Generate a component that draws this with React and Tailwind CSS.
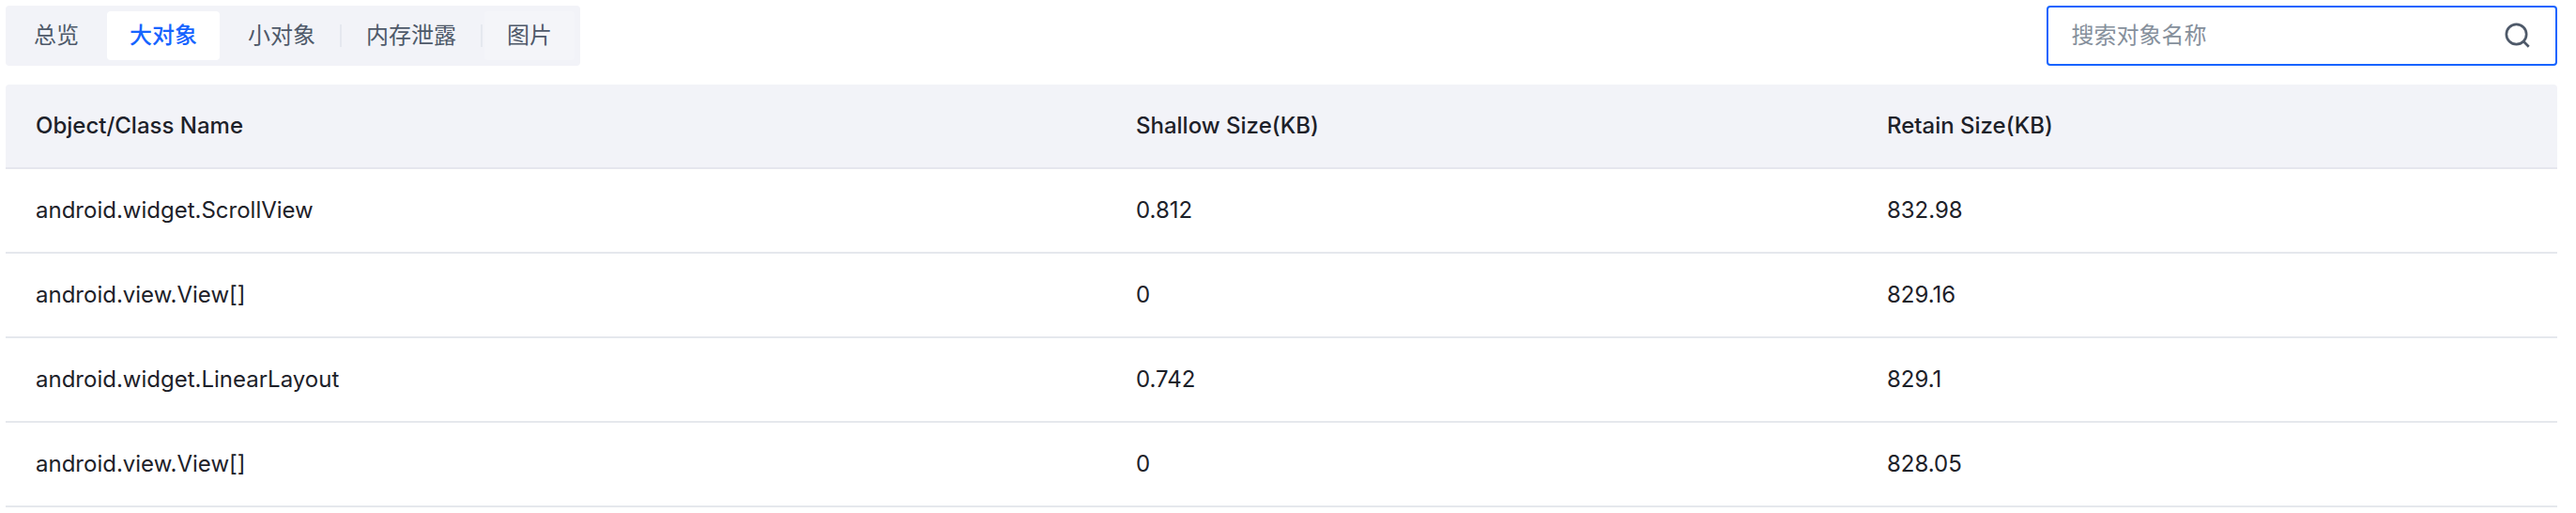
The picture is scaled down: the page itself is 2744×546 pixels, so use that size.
import { useState } from 'react';

const TABS = [
  { id: 'overview', label: '总览' },
  { id: 'large', label: '大对象' },
  { id: 'small', label: '小对象' },
  { id: 'leak', label: '内存泄露' },
  { id: 'image', label: '图片' },
];

const ROWS = [
  { id: 1, name: 'android.widget.ScrollView', shallow: '0.812', retain: '832.98' },
  { id: 2, name: 'android.view.View[]', shallow: '0', retain: '829.16' },
  { id: 3, name: 'android.widget.LinearLayout', shallow: '0.742', retain: '829.1' },
  { id: 4, name: 'android.view.View[]', shallow: '0', retain: '828.05' },
];

function getTabStyle(id, activeTab) {
  if (id === activeTab) return 'bg-white text-[#1664ff] font-medium';
  if (id === 'image') return 'bg-[#f4f5f9] text-[#4e5969]';
  return 'text-[#4e5969]';
}

function SearchIcon() {
  return (
    <svg className="w-8 h-8" viewBox="0 0 48 48" fill="none" stroke="currentColor" strokeWidth={4}>
      <path d="M33.072 33.071c6.248-6.248 6.248-16.379 0-22.627-6.249-6.249-16.38-6.249-22.628 0-6.248 6.248-6.248 16.379 0 22.627 6.248 6.248 16.38 6.248 22.628 0Zm0 0 8.485 8.485" />
    </svg>
  );
}

export default function App() {
  const [activeTab, setActiveTab] = useState('large');
  const [keyword, setKeyword] = useState('');

  const rows = ROWS.filter((row) => row.name.toLowerCase().includes(keyword.toLowerCase()));

  return (
    <div className="bg-white pt-1.5 pl-1.5 pr-5 font-['Inter','Noto_Sans_CJK_SC',sans-serif] text-[24px] leading-9 text-[#1d2129]">
      {/* Toolbar */}
      <div className="flex items-center justify-between mb-5">
        <div className="flex items-center h-16 p-1.5 rounded-sm bg-[#f2f3f8]">
          {TABS.map((tab, i) => {
            // no divider on either side of the active tab
            const prev = TABS[i - 1];
            const hasDivider = prev && prev.id !== activeTab && tab.id !== activeTab;
            return (
              <div key={tab.id} className="flex items-center">
                {i > 0 && (
                  <div className="flex justify-center w-1.5">
                    {hasDivider && <div className="w-0.5 h-6 bg-[#e5e8ef]" />}
                  </div>
                )}
                <button
                  onClick={() => setActiveTab(tab.id)}
                  className={`h-13 px-6 rounded-sm whitespace-nowrap ${getTabStyle(tab.id, activeTab)}`}
                >
                  {tab.label}
                </button>
              </div>
            );
          })}
        </div>

        <div className="flex items-center w-1/5 min-w-[240px] h-16 px-6 border-2 border-[#1664ff] rounded-sm bg-white">
          <input
            type="text"
            aria-label="搜索对象名称"
            placeholder="搜索对象名称"
            value={keyword}
            onChange={(e) => setKeyword(e.target.value)}
            className="flex-1 min-w-0 bg-transparent outline-none placeholder:text-[#86909c]"
          />
          <button aria-label="搜索" className="text-[#4e5969]">
            <SearchIcon />
          </button>
        </div>
      </div>

      {/* Object table */}
      <table className="w-full table-fixed border-separate border-spacing-0 text-left">
        <thead>
          <tr className="h-[90px]">
            <th className="w-[43.12%] px-8 font-medium bg-[#f2f3f8] border-b-2 border-[#e5e6ee] rounded-tl-sm">Object/Class Name</th>
            <th className="w-[29.43%] px-8 font-medium bg-[#f2f3f8] border-b-2 border-[#e5e6ee]">Shallow Size(KB)</th>
            <th className="px-8 font-medium bg-[#f2f3f8] border-b-2 border-[#e5e6ee] rounded-tr-sm">Retain Size(KB)</th>
          </tr>
        </thead>
        <tbody>
          {rows.map((row) => (
            <tr key={row.id} className="h-[90px]">
              <td className="px-8 border-b-2 border-[#e5e8ed]">{row.name}</td>
              <td className="px-8 border-b-2 border-[#e5e8ed]">{row.shallow}</td>
              <td className="px-8 border-b-2 border-[#e5e8ed]">{row.retain}</td>
            </tr>
          ))}
        </tbody>
      </table>
    </div>
  );
}
